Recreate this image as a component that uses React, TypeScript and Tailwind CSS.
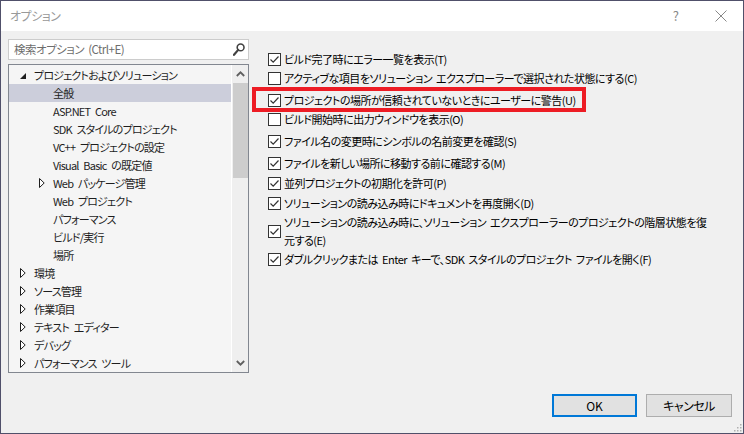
import React from "react";

const font = "font-['Noto_Sans_CJK_JP','Noto_Sans',sans-serif] [font-feature-settings:'palt']";

type Node = { label: string; level: 0 | 1; state?: "open" | "closed"; selected?: boolean };

const tree: Node[] = [
  { label: "プロジェクトおよびソリューション", level: 0, state: "open" },
  { label: "全般", level: 1, selected: true },
  { label: "ASP.NET Core", level: 1 },
  { label: "SDK スタイルのプロジェクト", level: 1 },
  { label: "VC++ プロジェクトの設定", level: 1 },
  { label: "Visual Basic の既定値", level: 1 },
  { label: "Web パッケージ管理", level: 1, state: "closed" },
  { label: "Web プロジェクト", level: 1 },
  { label: "パフォーマンス", level: 1 },
  { label: "ビルド/実行", level: 1 },
  { label: "場所", level: 1 },
  { label: "環境", level: 0, state: "closed" },
  { label: "ソース管理", level: 0, state: "closed" },
  { label: "作業項目", level: 0, state: "closed" },
  { label: "テキスト エディター", level: 0, state: "closed" },
  { label: "デバッグ", level: 0, state: "closed" },
  { label: "パフォーマンス ツール", level: 0, state: "closed" },
];

function Expander({ state }: { state?: "open" | "closed" }) {
  if (state === "open") {
    return (
      <svg width="6" height="6" viewBox="0 0 6 6" className="mt-[2px]">
        <path d="M6 0 L6 6 L0 6 Z" fill="#1e1e1e" />
      </svg>
    );
  }
  if (state === "closed") {
    return (
      <svg width="6" height="10" viewBox="0 0 6 10">
        <path d="M0.5 0.5 L5.2 5 L0.5 9.5 Z" fill="#fff" stroke="#1e1e1e" strokeWidth="1" />
      </svg>
    );
  }
  return null;
}

function TreeRow({ node }: { node: Node }) {
  const indent = node.level === 0 ? "pl-[11px]" : "pl-[30px]";
  return (
    <div className={`flex h-[18px] items-center ${indent} ${node.selected ? "bg-[#cccedb]" : ""}`}>
      <div className="flex w-[14px] justify-start">
        <Expander state={node.state} />
      </div>
      <span className="text-[11px] tracking-[-0.8px] [word-spacing:3px] leading-none text-[#1e1e1e] whitespace-nowrap">
        {node.label}
      </span>
    </div>
  );
}

function Check({ checked }: { checked: boolean }) {
  return (
    <div className="flex h-[13px] w-[13px] shrink-0 items-center justify-center border border-[#333] bg-white">
      {checked && (
        <svg width="11" height="11" viewBox="0 0 11 11">
          <path d="M1.5 5.5 L4.2 8.2 L9.5 2.5" fill="none" stroke="#333" strokeWidth="1.2" />
        </svg>
      )}
    </div>
  );
}

const optText = "text-[11px] tracking-[-0.5px] [word-spacing:2px] text-black whitespace-nowrap";

function Option({ text, checked = true, className = "" }: { text: React.ReactNode; checked?: boolean; className?: string }) {
  return (
    <div className={`flex h-[18px] items-center gap-[3px] ${className}`}>
      <Check checked={checked} />
      <span className={`${optText} leading-none`}>{text}</span>
    </div>
  );
}

export default function App() {
  return (
    <div className={`relative flex h-[434px] w-[744px] flex-col overflow-hidden border border-[#50506a] bg-[#f0f0f0] ${font}`}>
      {/* title bar */}
      <div className="flex h-[30px] shrink-0 items-center bg-white">
        <span className="pl-[9px] text-[12px] tracking-[-0.5px] text-[#999]">オプション</span>
        <div className="flex-1" />
        <span className="mr-[36px] text-[13px] text-[#888]">?</span>
        <svg width="12" height="12" viewBox="0 0 12 12" className="mr-[16px]">
          <path d="M0.5 0.5 L11.5 11.5 M11.5 0.5 L0.5 11.5" stroke="#888" strokeWidth="1" />
        </svg>
      </div>

      <div className="flex h-[342px]">
        {/* left */}
        <div className="flex w-[248px] shrink-0 flex-col pl-[7px] pt-[8px]">
          <div className="flex h-[21px] items-center border border-[#cccccc] bg-white pl-[5px] pr-[3px]">
            <span className="flex-1 text-[11.5px] tracking-[-0.5px] [word-spacing:2px] text-[#6d6d6d]">検索オプション (Ctrl+E)</span>
            <svg width="12" height="13" viewBox="0 0 12 13">
              <circle cx="7.6" cy="4.4" r="3.4" fill="none" stroke="#424242" strokeWidth="1.6" />
              <path d="M5.2 6.9 L1 11.8" stroke="#424242" strokeWidth="2.2" strokeLinecap="round" />
            </svg>
          </div>
          <div className="mt-[4px] flex h-[309px] border border-[#828790] bg-[#f5f5f5]">
            <div className="flex-1 pt-[1px]">
              {tree.map((n) => (
                <TreeRow key={n.label + n.level} node={n} />
              ))}
            </div>
            <div className="flex w-[17px] flex-col items-center border-l border-white bg-[#efefef]">
              <svg width="9" height="6" viewBox="0 0 9 6" className="mt-[6px]">
                <path d="M0.8 5 L4.5 1.3 L8.2 5" fill="none" stroke="#606060" strokeWidth="1.8" />
              </svg>
              <div className="mt-[6px] h-[95px] w-[15px] bg-[#cdcdcd]" />
              <div className="flex-1" />
              <svg width="9" height="6" viewBox="0 0 9 6" className="mb-[6px]">
                <path d="M0.8 1 L4.5 4.7 L8.2 1" fill="none" stroke="#606060" strokeWidth="1.8" />
              </svg>
            </div>
          </div>
        </div>

        {/* right */}
        <div className="flex flex-col pl-[19px] pt-[19px]">
          <Option text="ビルド完了時にエラー一覧を表示(T)" />
          <Option className="mt-[1px]" checked={false} text="アクティブな項目をソリューション エクスプローラーで選択された状態にする(C)" />
          <div className="relative mt-[4px]">
            <div className="absolute -left-[16px] -top-[4px] h-[25px] w-[334px] border-4 border-[#ed1c24]" />
            <Option text="プロジェクトの場所が信頼されていないときにユーザーに警告(U)" />
          </div>
          <Option className="mt-[1px]" checked={false} text="ビルド開始時に出力ウィンドウを表示(O)" />
          <Option className="mt-[4px]" text="ファイル名の変更時にシンボルの名前変更を確認(S)" />
          <Option className="mt-[4px]" text="ファイルを新しい場所に移動する前に確認する(M)" />
          <Option className="mt-[2px]" text="並列プロジェクトの初期化を許可(P)" />
          <Option className="mt-[2px]" text="ソリューションの読み込み時にドキュメントを再度開く(D)" />
          <div className="mt-[1px] flex items-center gap-[3px]">
            <Check checked />
            <span className={`${optText} leading-[18px]`}>
              ソリューションの読み込み時に、ソリューション エクスプローラーのプロジェクトの階層状態を復
              <br />
              元する(E)
            </span>
          </div>
          <Option className="mt-[1px]" text="ダブルクリックまたは Enter キーで、SDK スタイルのプロジェクト ファイルを開く(F)" />
        </div>
      </div>

      {/* buttons */}
      <div className="mt-[21px] flex justify-end gap-[9px] pr-[11px]">
        <button className="h-[23px] w-[85px] border-2 border-[#0078d7] bg-[#e1e1e1] text-[12px] text-black">OK</button>
        <button className="h-[23px] w-[86px] border border-[#adadad] bg-[#e1e1e1] text-[12px] tracking-[-0.5px] text-black">キャンセル</button>
      </div>

      <svg width="8" height="8" viewBox="0 0 8 8" className="absolute bottom-[1px] right-[1px]">
        <rect x="6" y="0" width="1.5" height="1.5" fill="#b0b0b0" />
        <rect x="3" y="3" width="1.5" height="1.5" fill="#b0b0b0" />
        <rect x="6" y="3" width="1.5" height="1.5" fill="#b0b0b0" />
        <rect x="0" y="6" width="1.5" height="1.5" fill="#b0b0b0" />
        <rect x="3" y="6" width="1.5" height="1.5" fill="#b0b0b0" />
        <rect x="6" y="6" width="1.5" height="1.5" fill="#b0b0b0" />
      </svg>
    </div>
  );
}
